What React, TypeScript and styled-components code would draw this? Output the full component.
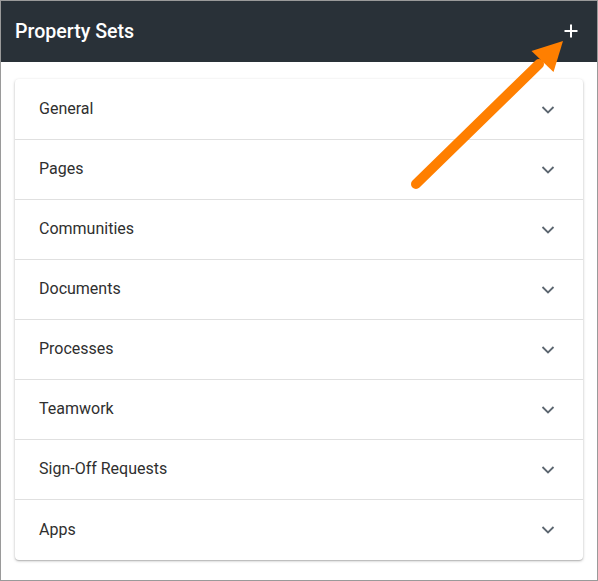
import React from "react";
import styled, { createGlobalStyle } from "styled-components";

const Global = createGlobalStyle`
  html, body { margin: 0; padding: 0; background: #fff; }
  body { font-family: Roboto, "Noto Sans", Arial, sans-serif; }
`;

const Frame = styled.div`
  position: relative;
  width: 598px;
  height: 581px;
  box-sizing: border-box;
  border: 1px solid #9a9a9a;
  background: #fff;
  display: flex;
  flex-direction: column;
  overflow: hidden;
`;

const Header = styled.header`
  height: 61px;
  background: #293138;
  display: flex;
  align-items: center;
  justify-content: space-between;
  padding: 0 16px 0 14px;
  flex-shrink: 0;
`;

const Title = styled.h1`
  margin: 0;
  color: #fff;
  font-family: Roboto, sans-serif;
  font-size: 19.6px;
  font-weight: 500;
  letter-spacing: 0;
`;

const AddButton = styled.button`
  background: none;
  border: none;
  padding: 0;
  width: 20px;
  height: 20px;
  display: flex;
  align-items: center;
  justify-content: center;
  margin-bottom: 2px;
  cursor: pointer;
`;

const Body = styled.main`
  padding: 17px 14px 0 14px;
`;

const Card = styled.section`
  background: #fff;
  border-radius: 4px;
  padding-top: 1px;
  box-shadow: 0 1px 3px rgba(0, 0, 0, 0.25), 0 1px 1px rgba(0, 0, 0, 0.12);
  display: flex;
  flex-direction: column;
`;

const Row = styled.div<{ $last?: boolean }>`
  height: 60px;
  box-sizing: border-box;
  display: flex;
  align-items: center;
  justify-content: space-between;
  padding: 0 28px 0 24px;
  border-bottom: ${(p) => (p.$last ? "none" : "1px solid #e0e0e0")};
`;

const Label = styled.span`
  font-family: Roboto, sans-serif;
  font-size: 16px;
  color: #2f2f2f;
  margin-bottom: 2px;
`;

const Overlay = styled.svg`
  position: absolute;
  left: 0;
  top: 0;
  pointer-events: none;
`;

const Chevron = () => (
  <svg width="14" height="10" viewBox="0 0 14 10">
    <path d="M1.5 2 L7 7.5 L12.5 2" fill="none" stroke="#5c6670" strokeWidth="1.8" />
  </svg>
);

const Plus = () => (
  <svg width="14" height="14" viewBox="0 0 14 14">
    <path d="M7 0.5 V13.5 M0.5 7 H13.5" stroke="#fff" strokeWidth="2" />
  </svg>
);

const items = [
  "General",
  "Pages",
  "Communities",
  "Documents",
  "Processes",
  "Teamwork",
  "Sign-Off Requests",
  "Apps",
];

export default function App() {
  return (
    <>
      <Global />
      <Frame>
        <Header>
          <Title>Property Sets</Title>
          <AddButton aria-label="Add">
            <Plus />
          </AddButton>
        </Header>
        <Body>
          <Card>
            {items.map((t, i) => (
              <Row key={t} $last={i === items.length - 1}>
                <Label>{t}</Label>
                <Chevron />
              </Row>
            ))}
          </Card>
        </Body>
        <Overlay width="598" height="581" viewBox="0 0 598 581">
          <line x1="415" y1="183" x2="538" y2="63" stroke="#ff7f00" strokeWidth="10" strokeLinecap="round" />
          <polygon points="562,40 530.5,50 552.5,71" fill="#ff7f00" />
        </Overlay>
      </Frame>
    </>
  );
}
